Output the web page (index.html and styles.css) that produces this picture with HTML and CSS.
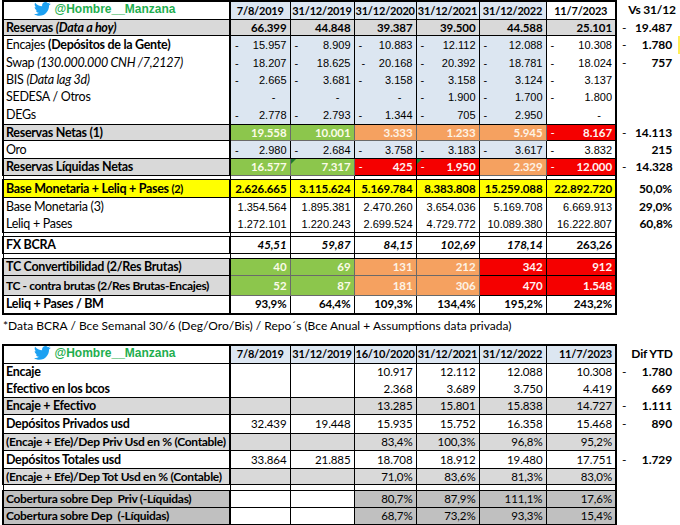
FILE: index.html
```html
<!DOCTYPE html>
<html lang="es">
<head>
<meta charset="utf-8">
<title>Reservas BCRA</title>
<link rel="stylesheet" href="styles.css">
</head>
<body>
<div class="page">
<table class="sheet t1">
  <colgroup>
    <col class="cl"><col class="c1"><col class="c2"><col class="c3"><col class="c4"><col class="c5"><col class="c6"><col class="cx">
  </colgroup>
  <tr class="hdr">
    <td class="lab handle"><span class="tw"><svg viewBox="0 0 24 20" width="17" height="14"><path fill="#1da1f2" d="M23.6 2.4c-.9.4-1.8.6-2.8.8 1-.6 1.8-1.5 2.1-2.7-.9.6-2 1-3.1 1.2C18.9.7 17.7.1 16.3.1c-2.7 0-4.9 2.2-4.9 4.9 0 .4 0 .8.1 1.1C7.5 5.9 3.9 4 1.5 1 1.1 1.7.8 2.6.8 3.5c0 1.7.9 3.2 2.2 4.1-.8 0-1.6-.2-2.2-.6v.1c0 2.4 1.7 4.4 3.9 4.8-.4.1-.8.2-1.3.2-.3 0-.6 0-.9-.1.6 2 2.4 3.4 4.6 3.4-1.7 1.3-3.8 2.1-6.1 2.1-.4 0-.8 0-1.2-.1 2.2 1.4 4.8 2.2 7.5 2.2 9.1 0 14-7.5 14-14v-.6c1-.7 1.8-1.6 2.5-2.6z"/></svg>@Hombre__Manzana</span></td>
    <td class="hd blue ctr">7/8/2019</td><td class="hd blue ctr">31/12/2019</td><td class="hd blue ctr">31/12/2020</td><td class="hd blue ctr">31/12/2021</td><td class="hd blue ctr">31/12/2022</td><td class="hd ctr">11/7/2023</td>
    <td class="x hd ctrx">Vs 31/12</td>
  </tr>
  <tr class="r16 gray b">
    <td class="lab">Reservas <i>(Data a hoy)</i></td>
    <td class="n">66.399</td><td class="n">44.848</td><td class="n">39.387</td><td class="n">39.500</td><td class="n">44.588</td><td class="n">25.101</td>
    <td class="x n"><span class="m">-</span>19.487</td>
  </tr>
  <tr class="r18 nb top">
    <td class="lab">Encajes <b>(Depósitos de la Gente)</b></td>
    <td class="n ar blue"><span class="m">-</span>15.957</td><td class="n ar blue"><span class="m">-</span>8.909</td><td class="n ar blue"><span class="m">-</span>10.883</td><td class="n ar blue"><span class="m">-</span>12.112</td><td class="n ar blue"><span class="m">-</span>12.088</td><td class="n ar"><span class="m">-</span>10.308</td>
    <td class="x n b ybar"><span class="m">-</span>1.780</td>
  </tr>
  <tr class="r18 nb">
    <td class="lab">Swap <i>(130.000.000 CNH /7,2127)</i></td>
    <td class="n ar blue"><span class="m">-</span>18.207</td><td class="n ar blue"><span class="m">-</span>18.625</td><td class="n ar blue"><span class="m m2">-</span>20.168</td><td class="n ar blue"><span class="m">-</span>20.392</td><td class="n ar blue"><span class="m">-</span>18.781</td><td class="n ar"><span class="m">-</span>18.024</td>
    <td class="x n b"><span class="m">-</span>757</td>
  </tr>
  <tr class="r17 nb">
    <td class="lab">BIS <i>(Data lag 3d)</i></td>
    <td class="n ar blue"><span class="m">-</span>2.665</td><td class="n ar blue"><span class="m">-</span>3.681</td><td class="n ar blue"><span class="m">-</span>3.158</td><td class="n ar blue"><span class="m">-</span>3.158</td><td class="n ar blue"><span class="m">-</span>3.124</td><td class="n ar"><span class="m">-</span>3.137</td>
    <td class="x"></td>
  </tr>
  <tr class="r17 nb">
    <td class="lab">SEDESA / Otros</td>
    <td class="n ar blue z">-</td><td class="n ar blue z">-</td><td class="n ar blue z">-</td><td class="n ar blue"><span class="m">-</span>1.900</td><td class="n ar blue"><span class="m">-</span>1.700</td><td class="n ar"><span class="m">-</span>1.800</td>
    <td class="x"></td>
  </tr>
  <tr class="r19 nb bot">
    <td class="lab">DEGs</td>
    <td class="n ar blue"><span class="m">-</span>2.778</td><td class="n ar blue"><span class="m">-</span>2.793</td><td class="n ar blue"><span class="m">-</span>1.344</td><td class="n ar blue"><span class="m">-</span>705</td><td class="n ar blue"><span class="m">-</span>2.950</td><td class="n ar z">-</td>
    <td class="x"></td>
  </tr>
  <tr class="r16 b">
    <td class="lab gray">Reservas Netas (1)</td>
    <td class="n green">19.558</td><td class="n green">10.001</td><td class="n orange">3.333</td><td class="n orange">1.233</td><td class="n orange">5.945</td><td class="n red"><span class="m">-</span>8.167</td>
    <td class="x n"><span class="m">-</span>14.113</td>
  </tr>
  <tr class="r18">
    <td class="lab">Oro</td>
    <td class="n ar blue"><span class="m">-</span>2.980</td><td class="n ar blue"><span class="m">-</span>2.684</td><td class="n ar blue"><span class="m">-</span>3.758</td><td class="n ar blue"><span class="m">-</span>3.183</td><td class="n ar blue"><span class="m">-</span>3.617</td><td class="n ar"><span class="m">-</span>3.832</td>
    <td class="x n b">215</td>
  </tr>
  <tr class="r17 b">
    <td class="lab gray">Reservas Líquidas Netas</td>
    <td class="n green">16.577</td><td class="n green mark">7.317</td><td class="n red"><span class="m">-</span>425</td><td class="n red mark"><span class="m">-</span>1.950</td><td class="n orange">2.329</td><td class="n red"><span class="m">-</span>12.000</td>
    <td class="x n"><span class="m">-</span>14.328</td>
  </tr>
  <tr class="sp"><td></td><td></td><td></td><td></td><td></td><td></td><td></td><td class="x"></td></tr>
  <tr class="r18 b yellow">
    <td class="lab">Base Monetaria + Leliq + Pases <small>(2)</small></td>
    <td class="n">2.626.665</td><td class="n">3.115.624</td><td class="n">5.169.784</td><td class="n">8.383.808</td><td class="n">15.259.088</td><td class="n">22.892.720</td>
    <td class="x n">50,0%</td>
  </tr>
  <tr class="r18 nb top">
    <td class="lab">Base Monetaria (3)</td>
    <td class="n ar">1.354.564</td><td class="n ar">1.895.381</td><td class="n ar">2.470.260</td><td class="n ar">3.654.036</td><td class="n ar">5.169.708</td><td class="n ar">6.669.913</td>
    <td class="x n b">29,0%</td>
  </tr>
  <tr class="r17 nb bot">
    <td class="lab">Leliq + Pases</td>
    <td class="n ar">1.272.101</td><td class="n ar">1.220.243</td><td class="n ar">2.699.524</td><td class="n ar">4.729.772</td><td class="n ar">10.089.380</td><td class="n ar">16.222.807</td>
    <td class="x n b">60,8%</td>
  </tr>
  <tr class="sp"><td></td><td></td><td></td><td></td><td></td><td></td><td></td><td class="x"></td></tr>
  <tr class="r17 b">
    <td class="lab">FX BCRA</td>
    <td class="n it">45,51</td><td class="n it">59,87</td><td class="n it">84,15</td><td class="n it">102,69</td><td class="n it">178,14</td><td class="n">263,26</td>
    <td class="x"></td>
  </tr>
  <tr class="sp2"><td></td><td></td><td></td><td></td><td></td><td></td><td></td><td class="x"></td></tr>
  <tr class="r17 b">
    <td class="lab gray">TC Convertibilidad (2/Res Brutas)</td>
    <td class="n green">40</td><td class="n green">69</td><td class="n orange">131</td><td class="n orange">212</td><td class="n red">342</td><td class="n red">912</td>
    <td class="x"></td>
  </tr>
  <tr class="r20 b">
    <td class="lab gray sq">TC - contra brutas (2/Res Brutas-Encajes)</td>
    <td class="n green">52</td><td class="n green">87</td><td class="n orange">181</td><td class="n orange">306</td><td class="n red">470</td><td class="n red">1.548</td>
    <td class="x"></td>
  </tr>
  <tr class="r18 b last">
    <td class="lab">Leliq + Pases / BM</td>
    <td class="n">93,9%</td><td class="n">64,4%</td><td class="n">109,3%</td><td class="n">134,4%</td><td class="n">195,2%</td><td class="n">243,2%</td>
    <td class="x"></td>
  </tr>
</table>
<p class="note">*Data BCRA / Bce Semanal 30/6 (Deg/Oro/Bis) / Repo´s (Bce Anual + Assumptions data privada)</p>

<table class="sheet t2">
  <colgroup>
    <col class="cl"><col class="c1"><col class="c2"><col class="c3"><col class="c4"><col class="c5"><col class="c6"><col class="cx">
  </colgroup>
  <tr class="hdr2">
    <td class="lab handle"><span class="tw"><svg viewBox="0 0 24 20" width="17" height="14"><path fill="#1da1f2" d="M23.6 2.4c-.9.4-1.8.6-2.8.8 1-.6 1.8-1.5 2.1-2.7-.9.6-2 1-3.1 1.2C18.9.7 17.7.1 16.3.1c-2.7 0-4.9 2.2-4.9 4.9 0 .4 0 .8.1 1.1C7.5 5.9 3.9 4 1.5 1 1.1 1.7.8 2.6.8 3.5c0 1.7.9 3.2 2.2 4.1-.8 0-1.6-.2-2.2-.6v.1c0 2.4 1.7 4.4 3.9 4.8-.4.1-.8.2-1.3.2-.3 0-.6 0-.9-.1.6 2 2.4 3.4 4.6 3.4-1.7 1.3-3.8 2.1-6.1 2.1-.4 0-.8 0-1.2-.1 2.2 1.4 4.8 2.2 7.5 2.2 9.1 0 14-7.5 14-14v-.6c1-.7 1.8-1.6 2.5-2.6z"/></svg>@Hombre__Manzana</span></td>
    <td class="hd blue ctr">7/8/2019</td><td class="hd blue ctr">31/12/2019</td><td class="hd blue ctr">16/10/2020</td><td class="hd blue ctr">31/12/2021</td><td class="hd blue ctr">31/12/2022</td><td class="hd blue n">11/7/2023</td>
    <td class="x hd ctrx">Dif YTD</td>
  </tr>
  <tr class="r17 nb top b2">
    <td class="lab">Encaje</td>
    <td></td><td></td><td class="n">10.917</td><td class="n">12.112</td><td class="n">12.088</td><td class="n">10.308</td>
    <td class="x n b"><span class="m">-</span>1.780</td>
  </tr>
  <tr class="r17 nb bot b2">
    <td class="lab">Efectivo en los bcos</td>
    <td></td><td></td><td class="n">2.368</td><td class="n">3.689</td><td class="n">3.750</td><td class="n">4.419</td>
    <td class="x n b">669</td>
  </tr>
  <tr class="r17 gray b2">
    <td class="lab">Encaje + Efectivo</td>
    <td></td><td></td><td class="n">13.285</td><td class="n">15.801</td><td class="n">15.838</td><td class="n">14.727</td>
    <td class="x n b"><span class="m">-</span>1.111</td>
  </tr>
  <tr class="r19 b2">
    <td class="lab">Depósitos Privados usd</td>
    <td class="n">32.439</td><td class="n">19.448</td><td class="n">15.935</td><td class="n">15.752</td><td class="n">16.358</td><td class="n">15.468</td>
    <td class="x n b"><span class="m">-</span>890</td>
  </tr>
  <tr class="r17 gray b2">
    <td class="lab sq2">(Encaje + Efe)/Dep Priv Usd en % (Contable)</td>
    <td></td><td></td><td class="n">83,4%</td><td class="n">100,3%</td><td class="n">96,8%</td><td class="n">95,2%</td>
    <td class="x"></td>
  </tr>
  <tr class="r18 b2">
    <td class="lab">Depósitos Totales usd</td>
    <td class="n">33.864</td><td class="n">21.885</td><td class="n">18.708</td><td class="n">18.912</td><td class="n">19.480</td><td class="n">17.751</td>
    <td class="x n b"><span class="m">-</span>1.729</td>
  </tr>
  <tr class="r16 gray b2">
    <td class="lab sq2">(Encaje + Efe)/Dep Tot Usd en % (Contable)</td>
    <td></td><td></td><td class="n">71,0%</td><td class="n">83,6%</td><td class="n">81,3%</td><td class="n">83,0%</td>
    <td class="x"></td>
  </tr>
  <tr class="sp3"><td></td><td></td><td></td><td></td><td></td><td></td><td></td><td class="x"></td></tr>
  <tr class="r17 b2">
    <td class="lab dgray sq3">Cobertura sobre Dep&nbsp; Priv (-Líquidas)</td>
    <td></td><td></td><td class="n dgray">80,7%</td><td class="n dgray">87,9%</td><td class="n dgray">111,1%</td><td class="n dgray">17,6%</td>
    <td class="x"></td>
  </tr>
  <tr class="r17 b2 last">
    <td class="lab dgray sq3">Cobertura sobre Dep&nbsp; (-Líquidas)</td>
    <td></td><td></td><td class="n dgray">68,7%</td><td class="n dgray">73,2%</td><td class="n dgray">93,3%</td><td class="n dgray">15,4%</td>
    <td class="x"></td>
  </tr>
</table>
</div>
</body>
</html>
```

FILE: styles.css
```css
html, body {
  margin: 0;
  padding: 0;
  background: #fff;
}
.page {
  width: 680px;
  padding: 0 0 0 2px;
  box-sizing: border-box;
  font-family: Lato, "Open Sans", sans-serif;
  color: #000;
}
.sheet {
  border-collapse: collapse;
  table-layout: fixed;
  width: 678px;
  font-size: 12px;
}
.cl { width: 227px; }
.c1 { width: 60px; }
.c2 { width: 64px; }
.c3 { width: 62px; }
.c4 { width: 63px; }
.c5 { width: 67px; }
.c6 { width: 70px; }
.cx { width: 65px; }

.sheet td {
  border: 1px solid #000;
  padding: 0 3px;
  white-space: nowrap;
  overflow: hidden;
  line-height: 14px;
  position: relative;
}
.sheet td.x {
  border: none;
  background: #fff;
  overflow: visible;
}
.sheet td.lab {
  border-left: 2px solid #000;
  border-right: 2px solid #000;
  text-align: left;
  padding-left: 2px;
  font-size: 12.5px;
  letter-spacing: -0.3px;
}
.sheet td.lab.sq { font-size: 12px; letter-spacing: -0.4px; }
.sheet td.lab.sq2 { font-size: 12px; letter-spacing: -0.3px; }
.sheet td.lab.sq3 { font-size: 12px; letter-spacing: -0.3px; }
.sheet tr td:nth-child(7) {
  border-right: 2px solid #000;
}
.hdr td, .hdr2 td {
  border-top: 2px solid #000;
}
.hdr td.x, .hdr2 td.x { border-top: none; }
.last td { border-bottom: 2px solid #000; }
.last td.x { border-bottom: none; }

.hdr { height: 17px; }
.hdr2 { height: 19px; }
.r16 { height: 16px; }
.r17 { height: 17px; }
.r18 { height: 18px; }
.r19 { height: 19px; }
.r20 { height: 20px; }
.sp { height: 4px; }
.sp td, .sp2 td, .sp3 td { padding: 0; line-height: 0; font-size: 0; }
.sp2 { height: 5px; }
.sp3 { height: 6px; }

.nb td { border-top: none; border-bottom: none; }
.nb.top td { border-top: 1px solid #000; }
.nb.bot td { border-bottom: 1px solid #000; }
.nb td.x { border: none; }

.b { font-weight: 700; }
.b2 td.lab { font-weight: 700; }
.sheet i { font-style: italic; }
.sheet small { font-size: 11px; }
.it { font-style: italic; }
.n {
  text-align: right;
  font-size: 11.5px;
  letter-spacing: -0.1px;
}
.hd {
  font-weight: 700;
  font-size: 11px;
  letter-spacing: -0.2px;
  padding: 0 1px !important;
}
.ctr { text-align: center; }
.sheet td.hd.n { padding-right: 3px !important; }
.ctrx { text-align: center; font-size: 12px !important; padding-left: 8px !important; }
.ar {
  font-family: "Liberation Sans", Arial, sans-serif;
  font-size: 11px;
  letter-spacing: 0;
}
.m {
  float: left;
  font-weight: 400;
  padding-left: 1px;
}
.m2 { padding-left: 4px; }
.z { padding-right: 14px !important; }
.x .m { padding-left: 2px; }
.x.n { padding-right: 8px; font-weight: 700; font-size: 12px; }

.blue { background: #dce6f1; }
.gray td { background: #d9d9d9; }
td.gray { background: #d9d9d9; }
td.dgray { background: #c0c0c0; }
.yellow td { background: #ffff00; }
.yellow td.x { background: #fff; }
.green { background: #8cc64c; color: #fbfbe8; }
.orange { background: #f5a160; color: #fdf3e6; }
.red { background: #f50000; color: #fff2f2; }
.green, .orange { border-color: #6a6a6a !important; }
.green .m, .orange .m, .red .m { color: #fff; }

.mark::before {
  content: "";
  position: absolute;
  left: 0;
  top: 0;
  border-top: 5px solid #1f7a2a;
  border-right: 5px solid transparent;
}
.ybar::after {
  content: "";
  position: absolute;
  right: 0;
  top: 0;
  width: 2px;
  height: 100%;
  background: #ffef5a;
}

.sheet td.handle {
  text-align: center;
  letter-spacing: 0;
}
.tw {
  display: inline-flex;
  align-items: center;
  gap: 3px;
  color: #1fae4f;
  font-family: "Liberation Sans", Arial, sans-serif;
  font-weight: 700;
  font-size: 12px;
  margin-left: -22px;
}

.note {
  margin: 4px 0 0 1px;
  font-size: 12px;
  line-height: 14px;
  height: 25px;
}
```
